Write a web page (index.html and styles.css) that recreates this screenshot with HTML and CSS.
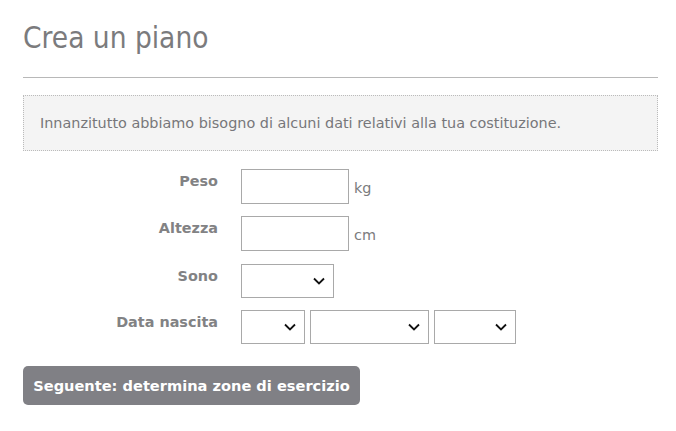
FILE: index.html
```html
<!DOCTYPE html>
<html lang="it">
<head>
  <meta charset="UTF-8" />
  <meta name="viewport" content="width=device-width, initial-scale=1.0"/>
  <title>Crea un piano</title>
  <link rel="stylesheet" href="styles.css">
</head>
<body>
  <div class="page">
    <h1 class="title">Crea un piano</h1>
    <hr class="rule">
    <div class="intro">Innanzitutto abbiamo bisogno di alcuni dati relativi alla tua costituzione.</div>

    <form class="form">
      <div class="row">
        <label class="label" for="peso">Peso</label>
        <div class="fields">
          <input class="box" type="text" id="peso">
          <span class="unit">kg</span>
        </div>
      </div>
      <div class="row">
        <label class="label" for="altezza">Altezza</label>
        <div class="fields">
          <input class="box" type="text" id="altezza">
          <span class="unit">cm</span>
        </div>
      </div>
      <div class="row tall">
        <label class="label" for="sono">Sono</label>
        <div class="fields">
          <select class="pick sono" id="sono"><option></option></select>
        </div>
      </div>
      <div class="row">
        <label class="label" for="giorno">Data nascita</label>
        <div class="fields dates">
          <select class="pick day" id="giorno"><option></option></select>
          <select class="pick month"><option></option></select>
          <select class="pick year"><option></option></select>
        </div>
      </div>
    </form>

    <button class="next" type="button">Seguente: determina zone di esercizio</button>
  </div>
</body>
</html>
```

FILE: styles.css
```css
* {
  box-sizing: border-box;
}

body {
  margin: 0;
  background-color: white;
  font-family: "DejaVu Sans", sans-serif;
  color: #777;
}

.page {
  padding: 18px 18px 0 23px;
}

.title {
  margin: 0;
  font-family: "DejaVu Sans Condensed", "DejaVu Sans", sans-serif;
  font-size: 29.5px;
  font-weight: normal;
  line-height: 40px;
  color: #7b7b7d;
}

.rule {
  margin: 19px 0 0;
  border: none;
  border-top: 1px solid #b8b8b8;
  height: 0;
}

.intro {
  margin-top: 17px;
  height: 56px;
  padding: 0 16px;
  display: flex;
  align-items: center;
  border: 1px dotted #bbb;
  background-color: #f4f4f4;
  font-size: 14.4px;
  color: #77777a;
}

.form {
  margin-top: 18px;
  display: flex;
  flex-direction: column;
  gap: 12px;
}

.row {
  display: flex;
  gap: 23px;
}

.row.tall {
  margin-top: 1px;
}

.label {
  width: 195px;
  text-align: right;
  padding-top: 4px;
  font-weight: bold;
  font-size: 14.4px;
  color: #828284;
}

.fields {
  display: flex;
  gap: 6px;
  align-items: center;
}

.fields.dates {
  gap: 5px;
}

.box {
  width: 108px;
  height: 35px;
  border: 1px solid #a9a9a9;
  background: white;
}

.unit {
  margin-top: 3px;
  margin-left: -1px;
  font-size: 14.4px;
  color: #7b7b7d;
}

.pick {
  height: 34px;
  border: 1px solid #a9a9a9;
  background: white;
  appearance: none;
  -webkit-appearance: none;
  background-image: url("data:image/svg+xml,%3Csvg xmlns='http://www.w3.org/2000/svg' width='12' height='8' viewBox='0 0 12 8'%3E%3Cpath d='M1 1.5l5 5 5-5' fill='none' stroke='%23111' stroke-width='1.8'/%3E%3C/svg%3E");
  background-repeat: no-repeat;
  background-position: right 8px center;
}

.sono {
  width: 93px;
}

.day {
  width: 64px;
}

.month {
  width: 119px;
}

.year {
  width: 82px;
}

.next {
  margin-top: 22px;
  width: 337px;
  height: 39px;
  border: none;
  border-radius: 5px;
  background-color: #808085;
  color: white;
  font-family: "DejaVu Sans", sans-serif;
  font-weight: bold;
  font-size: 14.6px;
}
```
